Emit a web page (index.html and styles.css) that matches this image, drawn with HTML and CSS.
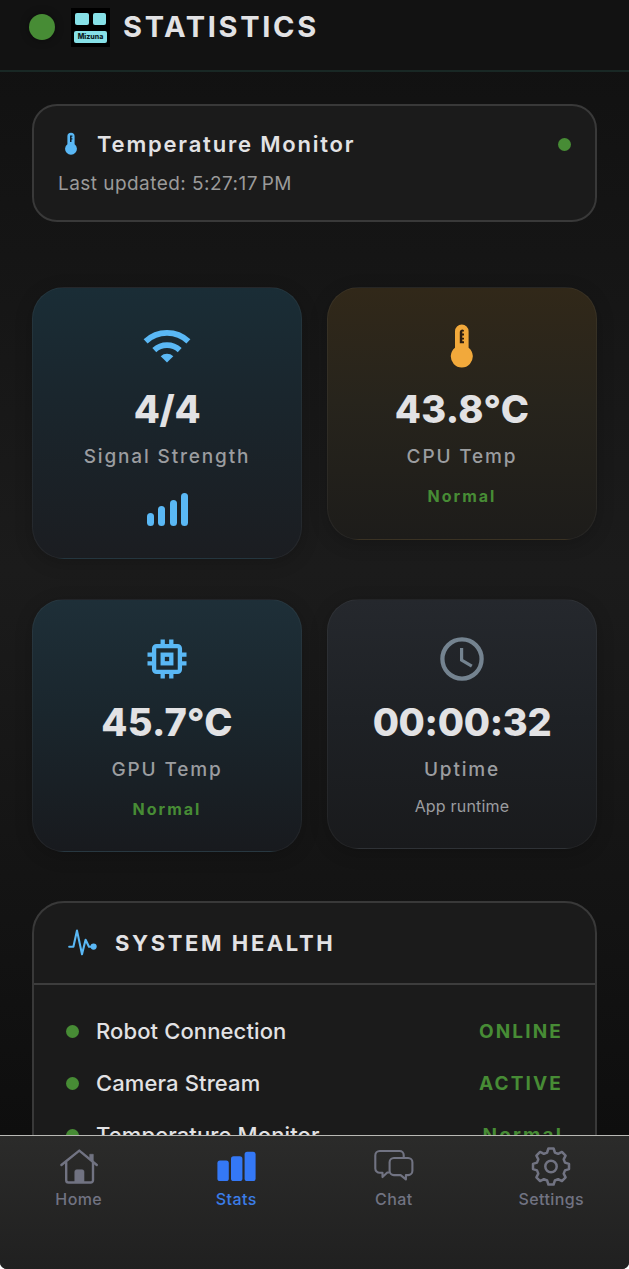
FILE: index.html
```html
<!DOCTYPE html>
<html lang="en">
<head>
<meta charset="utf-8">
<title>Statistics</title>
<link rel="stylesheet" href="styles.css">
</head>
<body>
<div class="app">
  <header class="header">
    <span class="header-dot"></span>
    <div class="logo">
      <div class="logo-eyes"><i></i><i></i></div>
      <div class="logo-name">Mizuna</div>
    </div>
    <h1 class="title">STATISTICS</h1>
  </header>

  <main class="content">
    <section class="monitor">
      <div class="monitor-head">
        <svg class="monitor-icon" width="14" height="24" viewBox="0 0 14 24"><path d="M3.4 12.200V4.300a3.600 3.600 0 0 1 7.200 0v7.900a5.900 5.900 0 1 1-7.200 0z" fill="#5ab8f5"/><path d="M6 10V3.600h2.400v1.200H7.500v1.400h.9v1.200h-.9V10z" fill="#10202c"/></svg>
        <h2 class="monitor-title">Temperature Monitor</h2>
        <span class="dot"></span>
      </div>
      <p class="monitor-time">Last updated: 5:27:17&#8239;PM</p>
    </section>

    <section class="grid">
      <article class="card card-signal">
        <svg class="card-icon" width="48" height="48" viewBox="0 -2 48 48"><g fill="none" stroke="#5ab8f5" stroke-width="5.8"><path d="M2.6 17.3a31.3 31.3 0 0 1 42.8 0"/><path d="M11.3 26.1a18.7 18.7 0 0 1 25.4 0"/></g><path d="M17.7 32.2a9.3 9.3 0 0 1 12.6 0L24 38.5z" fill="#5ab8f5"/></svg>
        <div class="value">4/4</div>
        <div class="label">Signal Strength</div>
        <div class="bars"><i class="bar b1"></i><i class="bar b2"></i><i class="bar b3"></i><i class="bar b4"></i></div>
      </article>
      <article class="card card-cpu">
        <svg class="card-icon" width="48" height="48" viewBox="0 0 48 48"><path d="M17 25.8V9.3a6.8 6.8 0 0 1 13.6 0v16.5a11 11 0 1 1-13.6 0z" fill="#f2a93b"/><path d="M21.8 21.2V9.8a2.3 2.3 0 0 1 4.2-1.2v.9h-1.7v2H26v2h-1.7v2.2H26v1.8h-1.7v1.8H26v1.9z" fill="#2b1d10"/></svg>
        <div class="value value-temp">43.8°C</div>
        <div class="label">CPU Temp</div>
        <div class="state">Normal</div>
      </article>
      <article class="card card-gpu">
        <svg class="card-icon" width="48" height="48" viewBox="0 0 48 48"><g fill="none" stroke="#5ab8f5" stroke-width="4.3"><rect x="11.1" y="11.1" width="25.8" height="25.8" rx="2.4"/><rect x="19.7" y="19.7" width="8.6" height="8.6"/><path d="M19.7 4.5V11M28.3 4.5V11M19.7 37v6.5M28.3 37v6.5M4.5 19.7H11M4.5 28.3H11M37 19.7h6.5M37 28.3h6.5"/></g></svg>
        <div class="value value-temp">45.7°C</div>
        <div class="label">GPU Temp</div>
        <div class="state">Normal</div>
      </article>
      <article class="card card-uptime">
        <svg class="card-icon" width="48" height="48" viewBox="0 0 48 48"><g fill="none" stroke="#748390"><circle cx="24" cy="24" r="19.6" stroke-width="4.3"/><path d="M23.6 13v12.2l10.2 6" stroke-width="3.2"/></g></svg>
        <div class="value">00:00:32</div>
        <div class="label">Uptime</div>
        <div class="note">App runtime</div>
      </article>
    </section>

    <section class="health">
      <div class="health-head">
        <svg width="30" height="28" viewBox="0 0 30 28"><path d="M1.2 17.8h4.2L9 1.6l5 23.6 3.6-14.4 3.4 7h4.5" fill="none" stroke="#5ab8f5" stroke-width="2.1" stroke-linejoin="round" stroke-linecap="round"/><circle cx="25.6" cy="17.6" r="3.1" fill="#5ab8f5"/></svg>
        <h2 class="health-title">SYSTEM HEALTH</h2>
      </div>
      <ul class="rows">
        <li class="row"><span class="dot"></span><span class="row-name">Robot Connection</span><span class="row-state">ONLINE</span></li>
        <li class="row"><span class="dot"></span><span class="row-name">Camera Stream</span><span class="row-state">ACTIVE</span></li>
        <li class="row"><span class="dot"></span><span class="row-name">Temperature Monitor</span><span class="row-state">Normal</span></li>
      </ul>
    </section>
  </main>

  <nav class="tabs">
    <a class="tab">
      <svg width="40" height="40" viewBox="0 0 40 40"><g fill="none" stroke="#717382" stroke-width="2.4" stroke-linecap="round" stroke-linejoin="round"><path d="M2.4 19 20.3 4.600l17.500 14.400"/><path d="M7.200 16.500v17.700a2.300 2.300 0 0 0 2.300 2.300h22.200a2.300 2.300 0 0 0 2.300-2.300V16.500"/></g><path d="M30.700 8.300h3.600v7.900l-3.600-3zM15.800 36.500V25.600a1.800 1.800 0 0 1 1.800-1.800h5.600a1.800 1.800 0 0 1 1.800 1.800v10.900z" fill="#717382" stroke="#717382" stroke-width=".6" stroke-linejoin="round"/></svg>
      <span>Home</span>
    </a>
    <a class="tab tab-active">
      <svg width="40" height="40" viewBox="0 -1 40 40"><g fill="#3478f6"><rect x="1.400" y="13.600" width="11.400" height="20.400" rx="2.600"/><rect x="15" y="9.200" width="11.400" height="24.800" rx="2.600"/><rect x="28.600" y="4.800" width="11" height="29.200" rx="2.600"/></g></svg>
      <span>Stats</span>
    </a>
    <a class="tab">
      <svg width="40" height="40" viewBox="0.5 -0.5 40 40"><g fill="none" stroke="#717382" stroke-width="2.1" stroke-linejoin="round"><path d="M30.200 11V8.500a4 4 0 0 0-4-4H6.200a4.400 4.400 0 0 0-4.400 4.400v13a4.400 4.400 0 0 0 4.400 4.400H9v4.300l4.800-4.600h1.700"/><path d="M20.400 11.500h14.200a4.300 4.300 0 0 1 4.300 4.300V24.300a4.300 4.300 0 0 1-4.300 4.300h-2.200v4.300l-5.300-4.300h-6.700a4.300 4.300 0 0 1-4.300-4.300V15.800a4.300 4.300 0 0 1 4.300-4.300z"/></g></svg>
      <span>Chat</span>
    </a>
    <a class="tab">
      <svg width="40" height="40" viewBox="-20 -20.500 40 40"><g fill="none" stroke="#717382" stroke-width="2.500" stroke-linejoin="round"><path d="M-3.900-14-2.600-18H2.600L3.900-14 7.100-12.700 10.900-14.600 14.600-10.900 12.700-7.100 14-3.900 18-2.600V2.600L14 3.900 12.700 7.100 14.600 10.900 10.900 14.600 7.100 12.700 3.900 14 2.600 18H-2.600L-3.900 14-7.100 12.700-10.900 14.600-14.600 10.900-12.700 7.100-14 3.900-18 2.600V-2.600L-14-3.900-12.700-7.100-14.600-10.900-10.900-14.600-7.100-12.700z"/><circle r="5.700"/></g></svg>
      <span>Settings</span>
    </a>
  </nav>
</div>
</body>
</html>
```
FILE: styles.css
```css
* { box-sizing: border-box; margin: 0; padding: 0; }
body { background: #fff; font-family: Inter, "Liberation Sans", sans-serif; color: #e2e2e4; }
svg { display: block; flex: none; }

.app {
  display: flex;
  flex-direction: column;
  width: 629px;
  height: 1269px;
  overflow: hidden;
  border-radius: 0 0 7px 7px;
  background: linear-gradient(180deg, #101010 0, #131313 150px, #1b1b1b 570px, #181818 700px, #0e0e0e 1135px);
}

/* Header */
.header {
  display: flex;
  align-items: center;
  flex: none;
  height: 72px;
  padding: 0 29px 16px;
  border-bottom: 2px solid #192825;
  background: #121212;
}
.header-dot { width: 26px; height: 26px; border-radius: 50%; background: #478c35; box-shadow: 0 0 9px #0006; }
.logo { width: 39px; height: 39px; margin: 0 13px 0 16px; padding: 5px 3px 4px; background: #000; }
.logo-eyes { display: flex; gap: 4px; padding: 0 1px; }
.logo-eyes i { flex: 1; height: 12px; border-radius: 2px; background: #86e0e7; }
.logo-name {
  height: 12px; margin-top: 6px; border-radius: 2px;
  background: #86e0e7; color: #0b2023;
  font-size: 7px; font-weight: 800; line-height: 11px; text-align: center;
}
.title { font-size: 29px; font-weight: 700; line-height: 36px; letter-spacing: 2.650px; }

/* Scrolling content */
.content { flex: 1; min-height: 0; overflow: hidden; padding: 32px 32px 0; }
.dot { flex: none; width: 13px; height: 13px; border-radius: 50%; background: #478c35; }

.monitor { height: 118px; padding: 23px 24px 0 23px; border: 2px solid #393939; border-radius: 25px; background: #1b1b1b; }
.monitor-head { display: flex; align-items: center; height: 30px; padding-left: 7px; }
.monitor-title { flex: 1; margin-left: 19px; font-size: 22px; font-weight: 600; line-height: 30px; letter-spacing: 1.800px; }
.monitor-time { margin-top: 10px; padding-left: 1px; font-size: 19px; line-height: 30px; letter-spacing: .450px; color: #9a9a9a; }

.grid { display: grid; grid-template-columns: 270px 270px; gap: 41px 25px; align-items: start; margin-top: 65px; }
.card {
  display: flex; flex-direction: column; align-items: center;
  height: 253px; padding-top: 34px;
  border: 1px solid #ffffff0c; border-radius: 32px;
  box-shadow: 0 4px 18px #00000030;
}
.card-signal { height: 272px; background: linear-gradient(#1a2d36, #1a252c 45%, #1b1d21); }
.card-cpu { background: linear-gradient(#312819, #27241c 45%, #1d1c1a); }
.card-gpu { background: linear-gradient(#1e2f38, #1a262d 45%, #181a1e); }
.card-uptime { height: 250px; background: linear-gradient(#25282d, #1e2125 48%, #191a1c); }
.card-gpu, .card-uptime { margin-top: -1px; padding-top: 35px; }
.value { margin-top: 13px; font-size: 38px; font-weight: 800; line-height: 52px; letter-spacing: -.3px; }
.value-temp { letter-spacing: .3px; }
.label { margin-top: 8px; font-size: 19px; font-weight: 500; line-height: 28px; letter-spacing: 1.850px; color: #9b9da0; }
.state { margin-top: 13px; font-size: 16px; font-weight: 700; line-height: 24px; letter-spacing: 2px; color: #478c35; }
.note { margin-top: 10px; font-size: 16px; line-height: 24px; letter-spacing: .2px; color: #9b9da0; }
.bars { display: flex; align-items: flex-end; gap: 4.300px; height: 33px; margin-top: 22px; padding-left: 1px; }
.bar { width: 7px; border-radius: 4px; background: #5ab8f5; }
.b1 { height: 13px; }
.b2 { height: 20px; }
.b3 { height: 26px; }
.b4 { height: 33px; }

.health { height: 400px; margin-top: 49px; border: 2px solid #393939; border-radius: 32px; background: #1b1b1b; }
.health-head { display: flex; align-items: center; gap: 17px; height: 82px; padding-left: 34px; border-bottom: 2px solid #3d3d3d; }
.health-title { font-size: 22px; font-weight: 700; line-height: 30px; letter-spacing: 2.600px; }
.rows { padding: 21px 32px 0; list-style: none; }
.row { display: flex; align-items: center; height: 51.700px; }
.row-name { flex: 1; margin: -1px 0 0 17px; font-size: 22px; font-weight: 500; letter-spacing: .12px; }
.row-state { font-size: 19px; font-weight: 700; letter-spacing: 2.150px; color: #478c35; }

/* Tab bar */
.tabs {
  display: grid; grid-template-columns: repeat(4, 157.500px); flex: none;
  height: 134px; padding-top: 10px;
  border-top: 1px solid #b9b9b5;
  background: linear-gradient(#2b2b2a, #202020);
}
.tab { display: flex; flex-direction: column; align-items: center; color: #717382; font-size: 16px; font-weight: 500; line-height: 26px; letter-spacing: .4px; }
.tab-active { color: #3b7de8; }
```
